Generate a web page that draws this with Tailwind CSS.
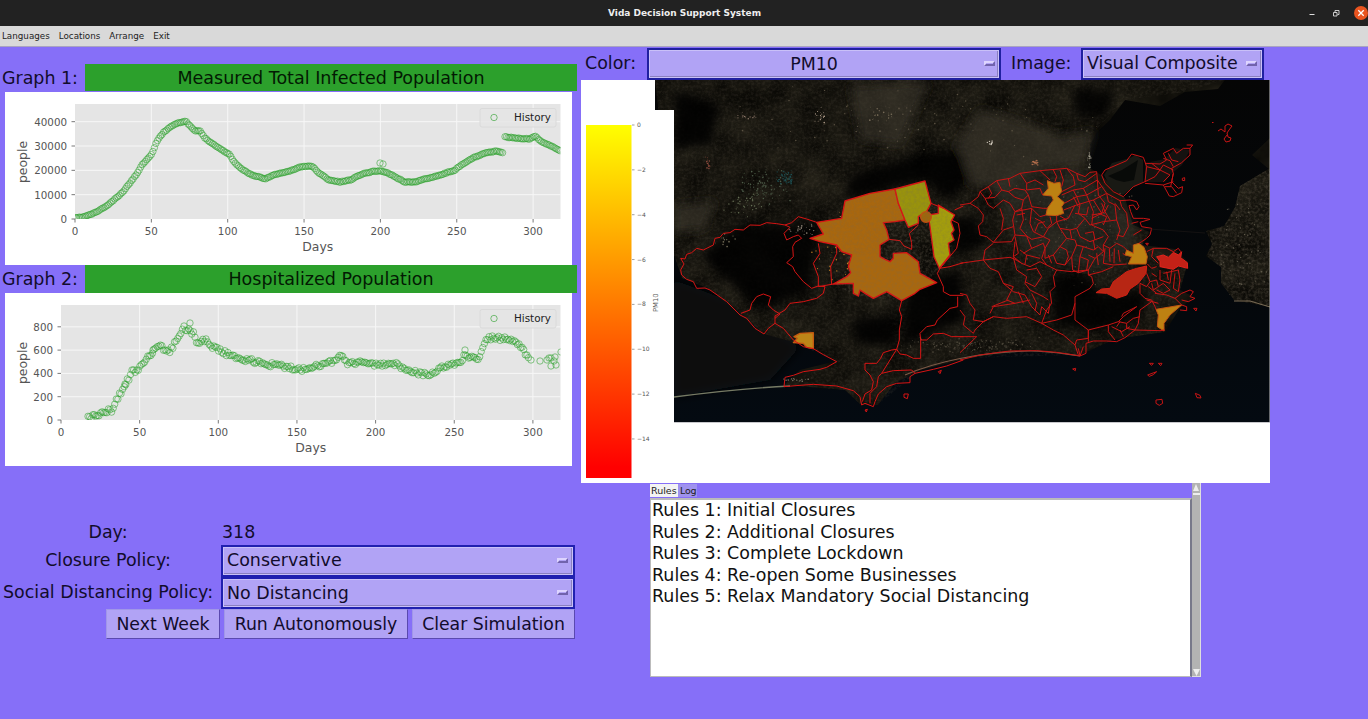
<!DOCTYPE html>
<html lang="en">
<head>
<meta charset="utf-8">
<title>Vida Decision Support System</title>
<script src="https://cdn.jsdelivr.net/npm/@tailwindcss/browser@4"></script>
</head>
<body class="w-[1368px] h-[719px] overflow-hidden bg-[#866ff8] font-['DejaVu_Sans',sans-serif] text-[17.450px] leading-5 text-[#120c2c] whitespace-nowrap">
<div class="flex flex-col h-full">
  <header class="h-[26px] shrink-0 bg-[#222] grid grid-cols-[1fr_auto_1fr] items-center text-white">
    <span></span>
    <h1 class="text-[9px] font-bold text-[#eee] leading-none pl-px">Vida Decision Support System</h1>
    <div class="flex justify-end">
      <svg width="64" height="24" fill="none" stroke="#ddd">
        <path d="M5.500 13.500h5"/><path d="M29.500 11.500h3.500v3.500h-3.500zM31 11v-1.500h4v4h-1.500" stroke-width=".9"/>
        <circle cx="57" cy="12" r="7" fill="#e9541f" stroke="none"/><path d="m54.300 9.300 5.400 5.400m0-5.400-5.400 5.400" stroke="#fff" stroke-width="1.300"/>
      </svg>
    </div>
  </header>
  <nav class="h-[21px] shrink-0 bg-[#d9d9d9] border-b border-[#a9a4c0] flex items-center gap-[9px] pl-[2px] text-[8.750px] leading-none text-[#222]">
    <span>Languages</span><span>Locations</span><span>Arrange</span><span>Exit</span>
  </nav>
  <main class="flex flex-1 min-h-0">
    <section class="w-[581px] shrink-0 pt-[17px] flex flex-col">
      <div class="flex h-[28px] w-[577px]"><span class="w-[85px] pl-[2px] pt-[4px]">Graph 1:</span><div class="flex-1 bg-[#2ca02c] text-center pt-[4px] text-[#031a03] text-[17.550px] h-[27px]">Measured Total Infected Population</div></div>
      <svg id="g1" class="ml-[5px] bg-white shrink-0" width="567" height="173" viewBox="5 92 567 173"></svg>
      <div class="flex h-[28px] w-[577px]"><span class="w-[85px] pl-[2px] pt-[4px]">Graph 2:</span><div class="flex-1 bg-[#2ca02c] text-center pt-[4px] text-[#031a03] text-[17.550px]">Hospitalized Population</div></div>
      <svg id="g2" class="ml-[5px] bg-white shrink-0" width="567" height="173" viewBox="5 293 567 173"></svg>
      <div class="mt-[56px] grid grid-cols-[216px_354px] gap-x-[5px] text-center">
        <span class="h-[23px]">Day:</span><span class="text-left pl-[1px]">318</span>
        <span class="pt-[5px]">Closure Policy:</span>
        <div class="h-[32px] border-2 border-[#2020b0] p-px bg-[#c9c0f8]"><div class="h-full bg-[#b1a3f5] flex items-center justify-between pl-[3px] pr-[3px] border-b border-r border-[#8a80c0]"><span class="-mt-px">Conservative</span><i class="w-[11px] h-[5px] border-2 border-t-[#ddd4ff] border-l-[#ddd4ff] border-b-[#7163ad] border-r-[#7163ad]"></i></div></div>
        <span class="pt-[5px]">Social Distancing Policy:</span>
        <div class="h-[32px] border-2 border-[#2020b0] p-px bg-[#c9c0f8]"><div class="h-full bg-[#b1a3f5] flex items-center justify-between pl-[3px] pr-[3px] border-b border-r border-[#8a80c0]"><span>No Distancing</span><i class="w-[11px] h-[5px] border-2 border-t-[#ddd4ff] border-l-[#ddd4ff] border-b-[#7163ad] border-r-[#7163ad]"></i></div></div>
      </div>
      <div class="flex gap-[4px] pl-[106px] h-[30px] text-[17.300px] *:bg-[#b1a3f5] *:border *:border-t-[#a197e8] *:border-l-[#a197e8] *:border-b-[#5a49b0] *:border-r-[#5a49b0]">
        <button class="w-[114px]">Next Week</button><button class="w-[184px]">Run Autonomously</button><button class="w-[163px]">Clear Simulation</button>
      </div>
    </section>
    <section class="flex-1 flex flex-col">
      <div class="flex h-[33px]">
        <span class="w-[66px] pl-[4px] pt-[6px]">Color:</span>
        <div class="h-[32px] mt-px w-[354px] border-2 border-[#2020a0] p-px bg-[#c9c0f8]"><div class="h-full bg-[#b1a3f5] flex items-center pl-[3px] pr-[2px] border-b border-r border-[#8a80c0]"><span class="flex-1 text-center pr-[9px]">PM10</span><i class="w-[11px] h-[5px] border-2 border-t-[#ddd4ff] border-l-[#ddd4ff] border-b-[#7163ad] border-r-[#7163ad]"></i></div></div>
        <span class="w-[80px] pl-[10px] pt-[6px]">Image:</span>
        <div class="h-[32px] mt-px w-[183px] border-2 border-[#2020a0] p-px bg-[#c9c0f8]"><div class="h-full bg-[#b1a3f5] flex items-center justify-between pl-[3px] pr-[3px] border-b border-r border-[#8a80c0]"><span class="-mt-px">Visual Composite</span><i class="w-[11px] h-[5px] border-2 border-t-[#ddd4ff] border-l-[#ddd4ff] border-b-[#7163ad] border-r-[#7163ad]"></i></div></div>
      </div>
      <svg id="map" class="bg-white shrink-0" width="689" height="403" viewBox="581 80 689 403">
        <defs>
          <linearGradient id="bar" x1="0" y1="0" x2="0" y2="1"><stop stop-color="#ff0"/><stop offset=".97" stop-color="#f00"/></linearGradient>
          <linearGradient id="sea" x1="0" y1="0" x2="0" y2="1"><stop stop-color="#050505"/><stop offset=".55" stop-color="#04070a"/><stop offset="1" stop-color="#040a11"/></linearGradient>
          <clipPath id="frame"><path d="M655 80h615v342H674V110h-19z"/></clipPath>
          <filter id="grain" x="0" y="0" width="100%" height="100%" color-interpolation-filters="sRGB">
            <feTurbulence type="fractalNoise" baseFrequency=".035" numOctaves="5" seed="8" result="n"/>
            <feColorMatrix in="n" values=".14 0 0 0 .012  .13 0 0 0 .010  .10 0 0 0 .002  0 0 0 0 1"/>
            <feComposite in2="SourceGraphic" operator="in"/>
          </filter>
          <filter id="fine" x="0" y="0" width="100%" height="100%" color-interpolation-filters="sRGB">
            <feTurbulence type="fractalNoise" baseFrequency=".35" numOctaves="3" seed="3"/>
            <feColorMatrix values="0 0 0 0 .45  0 0 0 0 .41  0 0 0 0 .35  0 1.300 0 0 -.5"/>
            <feComposite in2="SourceGraphic" operator="in"/>
          </filter>
          <filter id="soft" x="-30%" y="-30%" width="160%" height="160%"><feGaussianBlur stdDeviation="5"/></filter>
        </defs>
        <g clip-path="url(#frame)">
          <path d="M655 80h615v342H655z" fill="url(#sea)"/>
          <path d="M674 280 740 305 800 347 770 380 674 397z" fill="#0a100f" filter="url(#soft)"/>
          <g id="land">
            <path filter="url(#grain)" d="M655 80H1225L1218 89 1185 92 1160 106 1125 100 1110 120 1097 132 1090 145 1090 168 1101 175 1125 198 1133 225 1150 232 1142 245 1175 249 1188 262 1180 290 1194 297 1180 308 1165 332 1115 339 1080 355 1030 350 970 358 920 370 895 383 878 405 861 405 845 390 784 385 800 370 836 361 812 348 793 342 764 334 740 312 709 289 682 278 674 255z"/>
            <path filter="url(#fine)" opacity=".3" d="M655 80H1225L1185 92 1125 100 1092 134 1090 168 1133 225 1150 232 1142 245 1188 262 1180 290 1165 332 1115 339 1080 355 970 358 920 370 878 405 861 405 845 390 784 385 836 361 793 342 764 334 709 289 682 278 674 255z"/>
          </g>
          <g id="east">
            <path filter="url(#grain)" d="M1270 168 1240 186 1235 207 1224 226 1206 231 1212 244 1206 256 1221 267 1221 283 1234 300 1270 307zM1270 138 1252 155 1270 170z"/>
            <path filter="url(#fine)" opacity=".6" d="M1270 168 1240 186 1235 207 1224 226 1206 231 1212 244 1206 256 1221 267 1221 283 1234 300 1270 307z"/>
            <path d="M1234 301 1250 301 1270 307" fill="none" stroke="#796b55"/>
          </g>
          <g filter="url(#soft)">
            <path fill="#3d382f" opacity=".6" d="M980 108 1060 135 1095 130 1084 165 1050 170 1000 188 970 185 955 145zM850 85 930 82 900 145 860 140zM674 205 715 200 705 230 674 232z"/>
            <path fill="#37322b" opacity=".45" d="M990 185 1085 172 1130 215 1140 250 1090 270 1025 255z"/>
            <path fill="#020403" opacity=".85" d="M675 90 720 105 710 145 674 148zM850 175 920 155 960 150 970 180 950 200 925 180 845 200zM905 285 960 270 965 320 905 345zM1050 275 1090 275 1100 295 1150 290 1140 320 1090 330 1055 325zM700 255 740 225 820 225 810 290 760 310zM850 320 895 315 895 345 860 345z"/>
            <path fill="#030504" opacity=".8" d="M1075 88 1115 92 1105 118 1075 115zM950 220 975 215 985 245 955 255z"/>
          </g>
          <path d="M1104 175 1112 163 1130 158 1135 155 1143 160 1143 182 1132 188 1123 195 1112 190z" fill="#191914"/>
          <path d="M1108 176 1122 170 1138 160 1134 180 1124 182 1116 180z" fill="#080a08"/>
          <path d="M1145 163 1165 159 1175 148 1190 150 1182 165 1170 175 1165 182 1145 182z" fill="#161210"/>
          <path d="M674 397C720 391 770 387 790 386" fill="none" stroke="#777b65" stroke-width="1.300"/>
          <path d="M905 375C935 362 980 352 1030 351 1050 351 1065 354 1080 356" fill="none" stroke="#7d5a48" stroke-width="1.200"/>
          <g id="specks"></g>
          <g transform="translate(660 190) scale(.33333)" stroke="#d81414" stroke-width="3" stroke-linejoin="round" fill="none">
            <g fill="#a8670f" stroke-width="4">
              <path d="M470 97 545 85 555 33 630 10 705-3 715 40 735 90 705 95 670 98 680 120 687 148 660 165 660 200 675 208 690 215 700 205 700 190 740 188 775 215 780 250 830 278 780 298 765 310 725 332 680 305 640 325 615 310 600 300 595 318 580 310 580 280 520 282 560 260 572 248 565 230 575 195 545 185 530 165 480 155 450 145 490 132z"/>
              <path fill="#99930d" d="M705-3 795-27 813 40 800 65 775 80 775 100 745 112 735 90 715 40z"/>
              <path fill="#a39d0d" d="M835 45 884 75 873 95 882 120 874 130 882 150 865 160 870 195 838 235 822 200 810 110 805 75 835 70z"/>
              <circle cx="798" cy="81" r="16" fill="#9d670e" stroke="#c84f0d"/>
              <path fill="#bd8618" stroke="#c65a10" d="M402 440 420 430 460 428 460 476 440 472 430 460 400 458 412 445z"/>
            </g>
            <path d="M470 97 440 87 415 80 395 98 375 105 350 101 320 98 300 106 270 105 250 120 225 118 210 128 190 130 180 142 165 145 160 165 130 180 110 175 95 188 80 193 75 207 62 205 72 222 62 240 65 255 80 268 100 275 110 295 135 294 150 300 200 335 240 375 260 385 285 415 312 432 325 415 345 400 370 415 400 450 430 470 460 476 490 494 530 515 500 532 480 538 430 545 400 556 375 562 372 590 420 586 460 583 530 588 580 602 600 620 605 645 615 640 640 650 645 635 655 612 680 590 710 580 750 578 750 560 765 550 820 538 860 528 910 510"/>
            <path d="M375 105 390 112 372 130 380 150 400 140 415 135 425 145 405 157 398 170 400 200 380 218 398 230 405 245 430 275 455 295 475 288 495 290 490 310 470 325 430 335 390 340 375 360 345 378 345 400M243 370 270 360 275 340 290 320 310 312 332 320 325 345 340 360 360 372 345 385M475 160 480 190 460 220 475 260 475 290 520 282M530 165 530 190 512 230 515 285M725 332 718 360 725 380 718 420 718 450 710 478 695 480 670 488 662 505 650 520 615 520 615 540 630 555 640 575 635 600 615 612 607 635M710 478 690 510 665 550 655 560 650 590 630 610 630 640M665 550 700 542 755 540 765 550M710 478 720 492 740 495 760 505 782 505 782 450 800 450 820 432 850 430 875 440 910 440M782 450 780 430 800 410 825 405 832 390 870 355 893 350 893 320M840 235 832 250 850 290 850 305 870 316 910 316M838 235 870 230 910 218M687 148 720 152 732 168 755 178 755 158 748 130 775 105M813 40 850 55M875 90 895 100 900 130 890 175 840 235M884 60 910 48M732 612 745 612 742 626 732 622zM615 660 622 658 619 666zM835 545 844 541 840 551z"/>
          </g>
          <g transform="translate(960 140) scale(.33333)" stroke="#c81414" stroke-width="3" stroke-linejoin="round" fill="none">
            <g fill="#bd8112" stroke="#c45510">
              <path d="M262 122 282 130 300 127 305 155 292 170 313 188 305 200 311 220 290 227 258 225 262 205 280 180 275 168 248 165 265 145z"/>
              <path d="M500 330 520 340 520 315 537 310 552 322 562 350 558 372 505 372 515 350 495 345z"/>
              <path d="M588 508 665 495 630 525 612 550 612 573 592 560 595 525z"/>
            </g>
            <path fill="#b72614" stroke="#d52015" d="M408 458 425 447 450 445 460 425 480 410 500 395 530 385 560 378 558 400 535 430 510 447 500 465 470 475 440 460z"/>
            <path fill="#c32117" stroke="#e3231d" d="M590 350 610 345 625 352 640 337 655 345 665 335 662 353 682 368 683 385 655 378 640 388 600 380 600 365z"/>
            <path d="M0 195 30 190 55 170 60 155 85 140 110 122 150 115 180 100 240 92 320 85 350 100 375 110 390 97 410 95 412 120 440 160 480 182 510 180 530 185 537 200 530 210 520 195 507 197 512 215 520 235 550 235 570 238 540 247 545 260 575 265 570 285 560 295 545 305 537 310M30 190 55 205 70 225 68 245 55 258 60 285 80 290 100 307 155 305 165 285 200 288 215 298 250 290M100 310 75 330 70 360 0 370M70 360 150 352 165 358 185 370 210 380 240 365 260 375M60 155 75 175 105 172 125 150 145 155 165 145 195 150 205 165 190 180 165 172 145 155M75 175 85 195 100 205 130 180 150 190 165 215 158 240 165 285M110 122 120 140 125 150M180 100 200 130 200 150 240 145 248 165M200 130 225 120 250 135M240 92 270 120M320 85 340 110 345 135 305 155M350 100 355 120 375 125 410 100M305 165 340 150 370 145 412 120M313 190 350 170 380 165 425 140M311 210 350 195 400 180 440 160M205 165 215 200 250 205 262 205M190 180 185 205 165 215 215 205 240 230 258 225M185 205 190 240 180 265 200 288M215 205 210 250 220 275 250 290 265 265 290 245 290 227M225 235 245 245 260 265M340 150 350 170 360 195 355 220 375 235 390 255 430 245 470 240M345 195 325 235 290 245 300 265 330 270 350 265 375 235M370 145 380 165 390 190 400 215 395 255M412 120 415 165 435 190 425 220 395 225M440 160 445 185 465 195 470 240 480 270 470 300M480 182 485 200 500 220 505 260 490 290 470 285M465 190 480 210M250 290 270 300 255 325 255 355 280 345 300 320 320 295 300 265M320 295 345 300 350 315 335 350 338 390 355 398 360 350 370 320 350 315M280 345 290 370 315 375 335 350M355 398 385 390 405 355 430 335 430 315 445 290 430 270 395 255M370 320 400 330 415 320 430 335M350 265 360 290 390 305 430 290M385 345 405 355M430 315 450 325 470 310 490 320 500 330M435 325 430 370M448 325 450 365M463 325 462 370M475 330 480 365M488 340 495 345M430 370 460 375 500 372M165 305 160 350 185 370M165 290 175 340 160 350M200 288 215 325 190 340M215 325 250 310 255 325 245 355 260 375 290 390 335 395 385 390 385 405 395 410 400 430 390 445 345 470 345 540 385 570 385 605M385 405 425 395 460 380M100 307 130 270 160 260M290 390 280 410 285 440 270 455 275 490 260 510 245 550M70 360 90 385 115 395 130 430 160 455 195 465 215 500 240 525 245 500 265 520 270 490M160 352 170 390 200 410 195 430 210 450 250 470 265 480M200 390 230 385 245 410 225 440 195 425M130 430 160 440 140 480 165 490 210 480M95 500 145 480M90 520 100 500 165 490M0 460 20 465 30 490 45 510 40 540 70 545 100 530 140 535 200 530 245 550 280 570 310 585 345 615 355 645M245 550 290 540 335 525 345 490M45 570 70 545 100 530M0 510 15 530 10 555 40 580 45 570M0 590 50 590 0 638M345 615 350 600 385 595 385 570 445 555 445 575 465 600M445 555 475 545 500 550 500 565 525 570 535 550 540 510 575 485M475 545 490 530 530 500 490 520 485 530M500 550 520 535 540 530M455 560 485 575 510 560M0 660 60 645 110 638 150 633 230 632 290 637 330 643 360 648 378 640 378 610 400 603 440 603 470 605 495 593 525 570 600 572 615 570M355 625 360 648 370 620M560 335 580 325 620 325 640 335 655 325 662 335M562 372 575 385 590 380M560 400 570 425 560 440 540 430 540 460 555 475 575 480 585 500 588 508M570 425 590 420 595 440 580 450 575 430M595 440 610 430 630 450 610 460 590 450M600 390 600 420 630 430 635 390M610 400 655 390 660 420 655 455 640 445 645 400M585 460 620 465 645 475 665 495M645 475 665 460 690 450 700 455 690 470 705 475 685 485 665 480M665 495 680 500 680 512 660 510M580 325 575 350 595 370M560 480 595 490M565 440 590 460M425 105 435 90 500 62 515 42 550 52 560 80 555 125 520 140 490 170 460 155 435 130 425 105M555 70 600 72 620 60 610 40 640 25 650 40 670 25 690 25 690 45 665 68 635 85 640 100 635 125 655 145 668 140 665 158 640 170 628 168 610 135 555 130M560 80 600 90 630 105M575 70 600 90 585 110 555 125M600 90 610 75 640 90M610 125 630 105M610 135 640 125M680 15 698 15 690 25M667 115 674 113 674 122 667 121zM400 180 425 220M425 190 435 215 395 235M340 170 355 200M415 220 440 230 430 255"/>
            <path d="M270 230 275 250 262 265M300 228 320 240M225 275 235 250 255 245M345 220 380 225 385 200M330 270 335 295M375 280 400 275 405 300M300 320 320 330 325 350 315 375M265 345 275 370M360 350 385 360 380 390M400 300 405 330M410 340 415 375M445 195 435 215 450 240M85 140 95 160 85 175M145 115 150 140M280 90 290 110 285 125M300 90 310 120 305 140M180 330 200 345 240 355M200 345 195 372M120 205 130 235 125 270M170 225 195 220M610 55 630 62 640 80M625 40 635 60 655 65M615 140 635 140 650 160M640 100 632 140M515 250 535 245M520 285 545 270M575 400 590 410M620 395 625 420M215 460 230 490 225 512M175 455 190 490M470 560 480 545M490 590 480 570"/>
            <path d="M338 687 347 685 346 692zM568 670 580 670 575 676zM595 670 606 670 602 677zM563 705 590 695 580 704 568 709zM588 780 606 778 608 790 598 796 588 790zM706 760 720 766 723 774 711 773zM701 505 711 505 708 513zM557 310 565 310 562 316z"/>
          </g>
          <path d="M1212 122.500h1.500M1218 131 1221 129 1225 132 1225 126 1228 124 1232 126 1229 130 1227 133 1228 137 1231 138 1230 141 1226 142 1224 139 1227 135" fill="none" stroke="#c81414"/>
          <path d="M1135 228 1205 233" stroke="#1b1716" stroke-width=".7"/>
          <path filter="url(#fine)" opacity=".35" d="M815 225 841 218 845 201 925 181 932 205 950 215 955 240 940 268 925 285 902 301 855 295 835 285 850 265 845 250z"/>
        </g>
        <path d="M674 422.500h596V80" fill="none" stroke="#c8c8cc"/>
        <path d="M586 125h45.500v353H586z" fill="url(#bar)"/>
        <g id="ticks" font-size="6" fill="#555" stroke="none"></g>
        <text transform="translate(658 312) rotate(-90)" font-size="6.800" fill="#555">PM10</text>
      </svg>
      <div class="ml-[69px] w-[551px] h-[194px] flex">
        <div class="w-[542px] flex flex-col">
          <div class="flex h-[14px] pt-px text-[9.500px] leading-[14px] text-[#222]"><span class="bg-[#f3f3f3] w-[28px] pl-[1px]">Rules</span><span class="bg-[#9f92ee] w-[19px] pl-[2px] tracking-[-.2px]">Log</span></div>
          <div class="flex-1 mt-px bg-white border border-[#bbb] border-t-2 border-r-2 border-r-[#77788a] text-[#111] pl-px leading-[21.500px]">
            <p>Rules 1: Initial Closures</p><p>Rules 2: Additional Closures</p><p>Rules 3: Complete Lockdown</p><p>Rules 4: Re-open Some Businesses</p><p>Rules 5: Relax Mandatory Social Distancing</p>
          </div>
        </div>
        <svg class="bg-[#b3b3b3]" width="9" height="194"><path d="M8.500 0v194M0 193.500h9" stroke="#dedede"/><path d="M4 1 7 8H1zM1 10h7v2H1zM1 186h7l-3.500 7z" fill="#eee"/></svg>
      </div>
    </section>
  </main>
</div>
<script>
let seed = 11;
const rnd = () => (seed = (seed * 16807) % 2147483647) / 2147483647;
const at = (p, x) => { let i = 1; while (i < p.length - 1 && p[i][0] < x) i++; const [a, b] = p[i - 1], [c, d] = p[i]; return b + (d - b) * (x - a) / (c - a); };

// Draws one scatter panel; positions are given in the panel's own pixel space.
function chart(id, c) {
  let s = `<path d="M${c.x0} ${c.top}H560.500V${c.y0}H${c.x0}z" fill="#e5e5e5"/>`;
  const T = 'font-size="10.300" fill="#555"';
  for (let d = 0; d <= 300; d += 50) {
    const x = c.x0 + d * c.sx;
    if (d) s += `<path d="M${x} ${c.top}V${c.y0}" stroke="#f7f7f7"/>`;
    s += `<path d="M${x} ${c.y0}v3.500" stroke="#555" stroke-width=".8"/><text x="${x}" y="${c.y0 + 15.500}" text-anchor="middle" ${T}>${d}</text>`;
  }
  for (let v = 0; v <= 4; v++) {
    const y = c.y0 - v * c.sy;
    if (v) s += `<path d="M${c.x0} ${y}H560.500" stroke="#f7f7f7"/>`;
    s += `<path d="M${c.x0 - 3.500} ${y}h3.500" stroke="#555" stroke-width=".8"/><text x="${c.x0 - 8}" y="${y + 4}" text-anchor="end" ${T}>${v * c.step}</text>`;
  }
  s += `<text x="${(c.x0 + 560.500) / 2}" y="${c.y0 + 31.500}" text-anchor="middle" font-size="12.400" fill="#555">Days</text><text transform="translate(27 ${c.y0 - 57}) rotate(-90)" text-anchor="middle" font-size="12.400" fill="#555">people</text>`;
  s += `<clipPath id="${id}c"><path d="M${c.x0} ${c.top}H560.500V${c.y0}H${c.x0}z"/></clipPath><g clip-path="url(#${id}c)" fill="none" stroke="#2ca02c" stroke-opacity=".55">`;
  for (const p of c.runs) for (let x = p[0][0]; x <= p[p.length - 1][0]; x += c.sx) s += `<circle cx="${x.toFixed(1)}" cy="${(at(p, x) + (rnd() - .5) * c.jit).toFixed(1)}" r="3.200"/>`;
  for (const [x, y] of c.dots) s += `<circle cx="${x}" cy="${y}" r="3.200"/>`;
  s += `</g><rect x="480" y="${c.top + 4.500}" width="76" height="18.500" rx="2" fill="#e5e5e5" fill-opacity=".8" stroke="#dadada"/><circle cx="494" cy="${c.top + 13.500}" r="3.200" fill="none" stroke="#2ca02c" stroke-opacity=".6"/><text x="514" y="${c.top + 16.500}" font-size="10.400" fill="#222">History</text>`;
  document.getElementById(id).innerHTML = s;
}
chart('g1', { x0: 75, y0: 219, top: 104, sx: 1.527, sy: 24.330, step: 10000, jit: .8, dots: [[380, 163], [383, 164]],
  runs: [[[75,218],[83,217],[92,214],[100,210],[108,205],[115,199],[122,193],[129,184],[136,175],[142,165],[148,158],[152,154],[155,146],[158,139],[164,132],[170,127],[177,123],[186,121.500],[190,126],[195,131],[200,131],[205,138],[213,144],[222,150],[229,154],[235,163],[243,170],[252,175],[265,179],[273,175],[282,173],[290,171],[300,167],[312,166],[319,173],[329,180],[340,182],[350,180],[362,174],[375,171],[382,171],[390,174],[397,178],[405,182],[415,182],[425,179],[440,175],[455,170],[463,164],[473,158],[485,153],[497,151],[504,153.500]],[[505,137],[515,138],[529,139],[535,136],[542,142],[551,146],[561,151]]] });
chart('g2', { x0: 61, y0: 420, top: 305, sx: 1.573, sy: 23.300, step: 200, jit: 4.500, dots: [[190, 323],[153,350],[125,384],[465,350],[531,360],[540,361],[551,358],[547,360],[551,366],[556,365],[561,352],[555,357],[549,358],[554,361]],
  runs: [[[88,417],[97,416],[102,412],[113,410],[117,399],[122,391],[129,378],[133,370],[136,373],[142,364],[149,355],[155,350],[161,347],[170,352],[176,340],[184,327],[187,330],[193,333],[197,342],[205,340],[212,346],[220,350],[233,357],[248,360],[265,364],[282,366],[300,370],[316,365],[328,364],[338,357],[343,357],[347,363],[360,362],[375,365],[395,364],[409,370],[418,373],[428,375],[438,370],[448,365],[457,364],[466,355],[477,360],[481,353],[486,338],[495,338],[515,340],[522,349],[530,358]]] });

let t = '';
for (let i = 0; i <= 7; i++) { const y = 125 + i * 44.850; t += `<path d="M632 ${y}h2.500" stroke="#777" stroke-width=".7"/><text x="637" y="${y + 2}">${i ? '−' + i * 2 : 0}</text>`; }
document.getElementById('ticks').innerHTML = t;

// Bright built-up points scattered over the terrain: centre, spread, count, colour.
let k = '';
for (const [x, y, w, h, n, col] of [[785,178,10,9,60,'#1d4d50'],[765,187,32,20,90,'#4c5b48'],[745,205,25,14,40,'#667055'],[745,117,12,6,14,'#8b7668'],[820,115,6,10,20,'#b7a28f'],[708,163,3,8,15,'#8d4b3e'],[880,115,15,10,18,'#756a57'],[990,143,5,3,8,'#ddd5c8'],[1035,163,4,3,22,'#b56f4d'],[1089,160,2,12,16,'#aaa595'],[805,230,18,7,26,'#887d70'],[725,240,18,8,12,'#6f6954'],[860,218,30,12,25,'#cc8d43'],[850,265,50,30,40,'#bb7a22'],[970,345,80,8,130,'#4f493c'],[1070,230,70,60,110,'#4b4236'],[1240,250,28,50,60,'#5e584a'],[900,120,220,38,90,'#5a5142'],[800,380,18,3,16,'#787568']])
  for (let i = 0; i < n; i++) k += `<circle cx="${(x + (rnd() + rnd() - 1) * w).toFixed(1)}" cy="${(y + (rnd() + rnd() - 1) * h).toFixed(1)}" r="${(.35 + rnd() * .5).toFixed(2)}" fill="${col}"/>`;
document.getElementById('specks').innerHTML = k;
</script>
</body>
</html>
